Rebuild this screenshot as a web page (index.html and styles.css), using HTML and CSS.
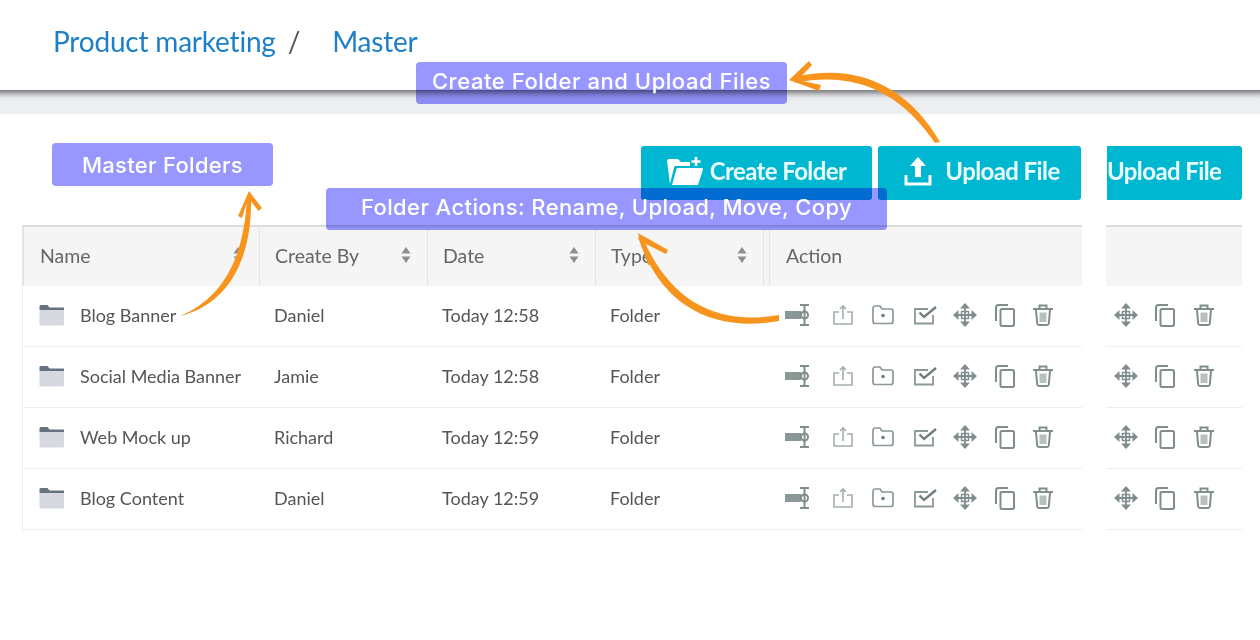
FILE: index.html
```html
<!DOCTYPE html>
<html>
<head>
  <title>Master Folders</title>
  <link rel="stylesheet" href="styles.css">
</head>
<body>
  <svg class="sprites" width="0" height="0">
    <symbol id="i-folder" viewBox="0 0 26 22">
      <path d="M1 2.500C1 1.500 1.600 1 2.500 1H9l2 2.500h13.500c.6 0 1 .4 1 1V6H1z" fill="#66727f"/>
      <path d="M1 6h24.500v14c0 1-.6 1.500-1.500 1.500H2.500C1.600 21.500 1 21 1 20z" fill="#d6d9df"/>
    </symbol>
    <symbol id="i-rename" viewBox="0 0 26 24">
      <path d="M0 8h16v8H0z" fill="#8a9797"/>
      <path d="M15 2h9M15 22h9M19.500 2v20" fill="none" stroke="#7f8d8d" stroke-width="2"/>
      <circle cx="19.500" cy="12" r="3.500" fill="none" stroke="#7f8d8d" stroke-width="2"/>
    </symbol>
    <symbol id="i-share" viewBox="0 0 24 24">
      <path d="M8 9H3v12h18V9h-5M12 16V3M9 6l3-3 3 3" fill="none" stroke="#a3adad" stroke-width="1.600"/>
    </symbol>
    <symbol id="i-addfolder" viewBox="0 0 24 24">
      <path d="M2 5.500C2 4 3 3 4 3h5l2 3h9c1.200 0 2 .8 2 2v10c0 1.500-.8 2.500-2 2.500H4c-1.200 0-2-1-2-2.500z" fill="none" stroke="#8b9898" stroke-width="1.700"/>
      <circle cx="12" cy="12.500" r="1.800" fill="#6f7d7d"/>
    </symbol>
    <symbol id="i-check" viewBox="0 0 24 24">
      <path d="M20 12v8.500H2V6h13" fill="none" stroke="#8b9898" stroke-width="1.800"/>
      <path d="M6.500 9.500l4.500 4.500L23 4" fill="none" stroke="#6f7d7d" stroke-width="2.400"/>
    </symbol>
    <symbol id="i-move" viewBox="0 0 24 24">
      <path d="M12 3v18M3 12h18" fill="none" stroke="#7f8d8d" stroke-width="1.800"/>
      <path d="M12 0l5 5.500H7zM12 24l-5-5.500h10zM0 12l5.500-5v10zM24 12l-5.500 5V7z" fill="#7f8d8d"/>
      <rect x="8.500" y="8.500" width="7" height="7" fill="none" stroke="#7f8d8d" stroke-width="1.400"/>
    </symbol>
    <symbol id="i-copy" viewBox="0 0 24 24">
      <path d="M15 2H5.500C4 2 3 3 3 4.500V18" fill="none" stroke="#7f8d8d" stroke-width="2"/>
      <rect x="7.500" y="6" width="13.500" height="17" rx="1.500" fill="none" stroke="#7f8d8d" stroke-width="2"/>
    </symbol>
    <symbol id="i-trash" viewBox="0 0 24 24">
      <path d="M2 6h20M8.500 5.500V2.500h7v3" fill="none" stroke="#7f8d8d" stroke-width="2"/>
      <path d="M5 7l1.200 13.500c.1 1 .8 1.500 1.800 1.500h8c1 0 1.700-.5 1.800-1.500L19 7" fill="none" stroke="#7f8d8d" stroke-width="2"/>
      <path d="M8.500 9.500h7v9.500h-7z" fill="#b7bfbf"/>
    </symbol>
    <symbol id="i-sort" viewBox="0 0 10 18">
      <path d="M5 1l4.500 6.500h-9zM5 17L.5 10.500h9z" fill="#8a8f93"/>
    </symbol>
  </svg>

  <header class="crumbs">
    <span class="crumb">Product marketing</span>
    <span class="crumb-sep">/</span>
    <span class="crumb">Master</span>
  </header>
  <div class="band"></div>

  <main class="panes">
    <section class="pane pane-main">
      <div class="toolbar">
        <button class="btn btn-folder">
          <svg class="btn-icon" width="36" height="30" viewBox="0 0 36 30">
            <path d="M3 28L0 5c0-1 .6-2 2-2h9l3 3h9v4H9c-1 0-1.600.4-2 1.500z" fill="#fff"/>
            <path d="M5 29l4.500-16c.2-.8.8-1 1.500-1h24c.8 0 1.200.6 1 1.400L31 29z" fill="#fff"/>
            <path d="M29 1v9M24.500 5.500h9" stroke="#fff" stroke-width="2.600" fill="none"/>
          </svg>
          Create Folder
        </button>
        <button class="btn btn-upload">
          <svg class="btn-icon" width="28" height="30" viewBox="0 0 28 30">
            <path d="M14 1l8 9h-5v11h-6V10H6z" fill="#fff"/>
            <path d="M2 19v9h24v-9" fill="none" stroke="#fff" stroke-width="3"/>
          </svg>
          Upload File
        </button>
      </div>
      <table class="files">
        <thead>
          <tr>
            <th class="col-name"><div class="th-inner">Name <svg class="sort"><use href="#i-sort"/></svg></div></th>
            <th class="col-by"><div class="th-inner">Create By <svg class="sort"><use href="#i-sort"/></svg></div></th>
            <th class="col-date"><div class="th-inner">Date <svg class="sort"><use href="#i-sort"/></svg></div></th>
            <th class="col-type"><div class="th-inner">Type <svg class="sort"><use href="#i-sort"/></svg></div></th>
            <th class="col-action">Action</th>
          </tr>
        </thead>
        <tbody>
          <tr>
            <td class="col-name"><div class="name-cell"><svg class="folder"><use href="#i-folder"/></svg>Blog Banner</div></td>
            <td>Daniel</td><td>Today 12:58</td><td>Folder</td>
            <td class="col-action"><div class="actions">
              <svg class="act act-rename"><use href="#i-rename"/></svg><svg class="act"><use href="#i-share"/></svg><svg class="act"><use href="#i-addfolder"/></svg><svg class="act"><use href="#i-check"/></svg><svg class="act"><use href="#i-move"/></svg><svg class="act"><use href="#i-copy"/></svg><svg class="act"><use href="#i-trash"/></svg>
            </div></td>
          </tr>
          <tr>
            <td class="col-name"><div class="name-cell"><svg class="folder"><use href="#i-folder"/></svg>Social Media Banner</div></td>
            <td>Jamie</td><td>Today 12:58</td><td>Folder</td>
            <td class="col-action"><div class="actions">
              <svg class="act act-rename"><use href="#i-rename"/></svg><svg class="act"><use href="#i-share"/></svg><svg class="act"><use href="#i-addfolder"/></svg><svg class="act"><use href="#i-check"/></svg><svg class="act"><use href="#i-move"/></svg><svg class="act"><use href="#i-copy"/></svg><svg class="act"><use href="#i-trash"/></svg>
            </div></td>
          </tr>
          <tr>
            <td class="col-name"><div class="name-cell"><svg class="folder"><use href="#i-folder"/></svg>Web Mock up</div></td>
            <td>Richard</td><td>Today 12:59</td><td>Folder</td>
            <td class="col-action"><div class="actions">
              <svg class="act act-rename"><use href="#i-rename"/></svg><svg class="act"><use href="#i-share"/></svg><svg class="act"><use href="#i-addfolder"/></svg><svg class="act"><use href="#i-check"/></svg><svg class="act"><use href="#i-move"/></svg><svg class="act"><use href="#i-copy"/></svg><svg class="act"><use href="#i-trash"/></svg>
            </div></td>
          </tr>
          <tr>
            <td class="col-name"><div class="name-cell"><svg class="folder"><use href="#i-folder"/></svg>Blog Content</div></td>
            <td>Daniel</td><td>Today 12:59</td><td>Folder</td>
            <td class="col-action"><div class="actions">
              <svg class="act act-rename"><use href="#i-rename"/></svg><svg class="act"><use href="#i-share"/></svg><svg class="act"><use href="#i-addfolder"/></svg><svg class="act"><use href="#i-check"/></svg><svg class="act"><use href="#i-move"/></svg><svg class="act"><use href="#i-copy"/></svg><svg class="act"><use href="#i-trash"/></svg>
            </div></td>
          </tr>
        </tbody>
      </table>
    </section>

    <section class="pane pane-side">
      <div class="toolbar">
        <button class="btn btn-cut">Upload File</button>
      </div>
      <div class="side-head"></div>
      <div class="side-row"><svg class="act"><use href="#i-move"/></svg><svg class="act"><use href="#i-copy"/></svg><svg class="act"><use href="#i-trash"/></svg></div>
      <div class="side-row"><svg class="act"><use href="#i-move"/></svg><svg class="act"><use href="#i-copy"/></svg><svg class="act"><use href="#i-trash"/></svg></div>
      <div class="side-row"><svg class="act"><use href="#i-move"/></svg><svg class="act"><use href="#i-copy"/></svg><svg class="act"><use href="#i-trash"/></svg></div>
      <div class="side-row"><svg class="act"><use href="#i-move"/></svg><svg class="act"><use href="#i-copy"/></svg><svg class="act"><use href="#i-trash"/></svg></div>
    </section>
  </main>

  <div class="note note-top"><span>Create Folder and Upload Files</span></div>
  <div class="note note-master"><span>Master Folders</span></div>
  <div class="note note-actions"><span>Folder Actions: Rename, Upload, Move, Copy</span></div>

  <svg class="arrows" width="1260" height="640" viewBox="0 0 1260 640">
    <g fill="#f7941d">
      <path d="M180 316C226 305 253 262 251 195L247 195C245 258 222 299 180 316z"/>
      <path d="M249 191L262 208 258.500 211 248.500 198 242 218 238 216z"/>
      <path d="M779 315C715 326 669 300 642 236L638 237C660 305 712 333 779 321z"/>
      <path d="M638 233L668 250 666 254 644 243 652 264 648 265z"/>
      <path d="M940 142C906 84 855 63 795 77L795 83C852 71 899 90 935 143z"/>
      <path d="M789 80L809 61 812 65 798 80 821 85 819 91z"/>
    </g>
  </svg>
</body>
</html>
```

FILE: styles.css
```css
body {
  position: relative;
  width: 1260px;
  height: 640px;
  margin: 0;
  overflow: hidden;
  background-color: #fff;
  font-family: "Lato", sans-serif;
  color: #555;
}

.sprites {
  display: block;
}

.crumbs {
  display: flex;
  align-items: center;
  height: 90px;
  padding: 0 0 8px 53px;
  box-sizing: border-box;
  font-size: 28px;
  letter-spacing: -0.2px;
  color: #1b7fc9;
}

.crumb-sep {
  margin: 0 32px 0 12px;
  color: #555;
}

.band {
  height: 24px;
  background: linear-gradient(#7a7c80 0, #9a9c9f 2px, #c9cbce 5px, #e6e8eb 8px, #eceef1 11px);
}

.panes {
  display: flex;
  gap: 24px;
  padding: 32px 0 0 22px;
}

.pane-main {
  width: 1060px;
}

.pane-side {
  width: 136px;
}

.toolbar {
  display: flex;
  justify-content: flex-end;
  gap: 6px;
  height: 54px;
  margin-bottom: 25px;
}

.pane-main .toolbar {
  padding-right: 1px;
}

.btn {
  display: flex;
  align-items: center;
  justify-content: center;
  height: 54px;
  padding: 0 0 5px;
  border: none;
  border-radius: 3px;
  background-color: #00b7d1;
  color: #e8fbff;
  font-family: "Lato", sans-serif;
  font-size: 24px;
  font-weight: 700;
  letter-spacing: -0.6px;
}

.btn-folder {
  width: 231px;
  gap: 7px;
}

.btn-upload {
  width: 203px;
  gap: 13px;
  padding-left: 5px;
}

.btn-cut {
  width: 135px;
  justify-content: flex-start;
  border-radius: 0 3px 3px 0;
}

.files {
  width: 1060px;
  table-layout: fixed;
  border-collapse: separate;
  border-spacing: 0;
  font-size: 18px;
}

.files th,
.files td {
  box-sizing: border-box;
}

.files th {
  height: 61px;
  padding: 0 0 3px 15px;
  border-top: 2px solid #dcdcdc;
  border-left: 1px solid #e4e4e4;
  background-color: #f5f5f5;
  font-size: 19.500px;
  font-weight: 400;
  text-align: left;
  color: #666;
}

.files td {
  height: 61px;
  padding: 0 0 2px 15px;
  border-bottom: 1px solid #eee;
}

.files th:first-child {
  padding-left: 16px;
  border-left: 2px solid #e4e4e4;
}

.files td:first-child {
  padding-left: 15px;
  border-left: 1px solid #f0f0f0;
}

.files .col-name { width: 237px; }
.files .col-by { width: 168px; }
.files .col-date { width: 168px; }
.files .col-type { width: 168px; }

.files th.col-action {
  padding-left: 22px;
  box-shadow: inset 5px 0 0 #f5f5f5, inset 6px 0 0 #e4e4e4;
}

.th-inner {
  display: flex;
  align-items: center;
  justify-content: space-between;
  padding-right: 16px;
}

.sort {
  width: 10px;
  height: 18px;
}

.name-cell {
  display: flex;
  align-items: center;
  gap: 15px;
}

.folder {
  width: 27px;
  height: 22px;
  flex-shrink: 0;
}

.actions {
  display: flex;
  gap: 16px;
  padding-left: 7px;
}

.act {
  width: 24px;
  height: 24px;
  flex-shrink: 0;
}

.act-rename {
  width: 26px;
  margin-right: 4px;
}

.actions .act:nth-child(4) {
  margin-left: 2px;
}

.actions .act:nth-child(6) {
  margin-right: -2px;
}

.side-head {
  height: 59px;
  border-top: 2px solid #dcdcdc;
  background-color: #f5f5f5;
}

.side-row {
  display: flex;
  align-items: center;
  gap: 15px;
  height: 58px;
  padding: 0 0 2px 8px;
  border-bottom: 1px solid #eee;
}

.note {
  position: absolute;
  display: flex;
  align-items: center;
  justify-content: center;
  color: #fff;
  font-family: "Inter", sans-serif;
  font-size: 22px;
  font-weight: 500;
  letter-spacing: 0.4px;
}

.note::before {
  content: "";
  position: absolute;
  top: 0;
  right: 0;
  bottom: 0;
  left: 0;
  border-radius: 4px;
  background-color: #9797ff;
  mix-blend-mode: multiply;
}

.note span {
  position: relative;
}

.note-top {
  left: 416px;
  top: 62px;
  width: 371px;
  height: 42px;
  padding-bottom: 5px;
  box-sizing: border-box;
  letter-spacing: 0.55px;
}

.note-master {
  left: 52px;
  top: 143px;
  width: 221px;
  height: 43px;
  letter-spacing: 0.3px;
}

.note-actions {
  left: 326px;
  top: 188px;
  width: 561px;
  height: 42px;
  padding-bottom: 4px;
  box-sizing: border-box;
}

.arrows {
  position: absolute;
  left: 0;
  top: 0;
  pointer-events: none;
}
```
